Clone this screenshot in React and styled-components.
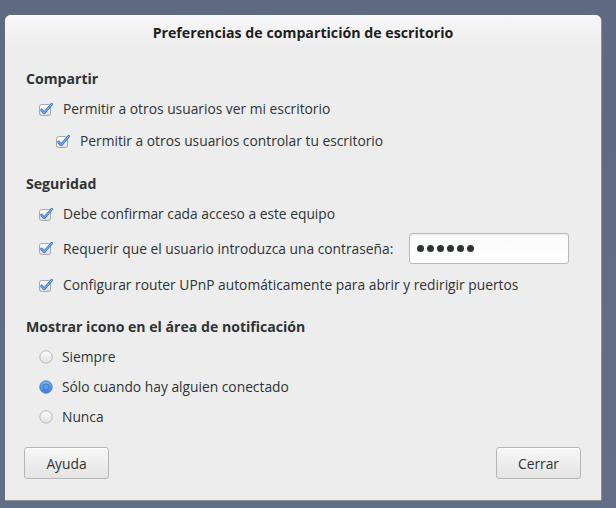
import React, { useState } from 'react';
import styled, { createGlobalStyle } from 'styled-components';

const GlobalStyle = createGlobalStyle`
  html, body {
    margin: 0;
    padding: 0;
    background: #616c82;
  }
  body {
    font-family: "Open Sans", "DejaVu Sans", sans-serif;
    color: #2e3436;
  }
`;

const Desktop = styled.div`
  width: 616px;
  height: 508px;
  padding: 15px 0 0 5px;
  box-sizing: border-box;
  background: linear-gradient(180deg, #5f6a80 0%, #646f85 100%);
`;

const Window = styled.div`
  width: 596px;
  height: 485px;
  display: flex;
  flex-direction: column;
  background: #ededed;
  border-radius: 6px 6px 0 0;
  box-shadow: 0 1px 0 #8d8f94, 1px 0 0 #8d8f94;
  overflow: hidden;
`;

const TitleBar = styled.div`
  height: 35px;
  display: flex;
  align-items: center;
  justify-content: center;
  background: linear-gradient(180deg, #f7f7f7 0%, #ededed 100%);
  font-size: 14.2px;
  font-weight: 700;
  color: #1e1e1e;
`;

const Content = styled.div`
  flex: 1;
  display: flex;
  flex-direction: column;
  padding: 20px 20px 21px 19px;
`;

const Heading = styled.div`
  height: 20px;
  line-height: 20px;
  padding-left: 2px;
  font-size: 14.1px;
  font-weight: 700;
  margin-top: ${(p) => p.$top || 0}px;
`;

const Row = styled.label`
  display: flex;
  align-items: center;
  gap: 9px;
  height: ${(p) => p.$h || 30}px;
  margin-top: ${(p) => p.$top || 0}px;
  padding-left: ${(p) => p.$indent || 15}px;
  font-size: 13.8px;
  line-height: 1;
`;

const Entry = styled.div`
  width: 160px;
  height: 31px;
  box-sizing: border-box;
  margin-left: 7px;
  padding-left: 7px;
  display: flex;
  align-items: center;
  gap: 3px;
  border: 1px solid #b9b9b9;
  border-radius: 3px;
  background: linear-gradient(180deg, #fafafa 0%, #ffffff 100%);
  box-shadow: inset 0 1px 1px rgba(0, 0, 0, 0.06);
`;

const Dot = styled.span`
  width: 7px;
  height: 7px;
  border-radius: 50%;
  background: #2e3436;
`;

const ButtonBar = styled.div`
  display: flex;
  justify-content: space-between;
  margin-top: 15px;
`;

const Button = styled.button`
  width: 85px;
  height: 32px;
  border: 1px solid #b6b6b6;
  border-radius: 3px;
  background: linear-gradient(180deg, #f7f7f7 0%, #e4e4e4 100%);
  box-shadow: inset 0 1px 0 #ffffff;
  font-family: inherit;
  font-size: 13.8px;
  color: #2e3436;
  cursor: pointer;
`;

const Check = () => (
  <svg width="15" height="15" viewBox="0 0 15 15">
    <defs>
      <linearGradient id="cbg" x1="0" y1="0" x2="0" y2="1">
        <stop offset="0" stopColor="#ffffff" />
        <stop offset="1" stopColor="#dedede" />
      </linearGradient>
    </defs>
    <rect x="0.5" y="2.5" width="11" height="11" rx="2" fill="url(#cbg)" stroke="#a9a9a9" />
    <path d="M2.5 8 L5.2 10.8 L12.8 2.2" fill="none" stroke="#3b7bd0" strokeWidth="2.6" strokeLinecap="round" strokeLinejoin="round" />
    <path d="M2.5 8 L5.2 10.8 L12.8 2.2" fill="none" stroke="#8dbcf4" strokeWidth="1" strokeLinecap="round" strokeLinejoin="round" />
  </svg>
);

const Radio = ({ on }) => (
  <svg width="14" height="14" viewBox="0 0 14 14">
    <defs>
      <linearGradient id="rbg" x1="0" y1="0" x2="0" y2="1">
        <stop offset="0" stopColor="#ffffff" />
        <stop offset="1" stopColor="#e0e0e0" />
      </linearGradient>
      <linearGradient id="rbon" x1="0" y1="0" x2="0" y2="1">
        <stop offset="0" stopColor="#7fb2f3" />
        <stop offset="1" stopColor="#3a7fdc" />
      </linearGradient>
    </defs>
    <circle cx="7" cy="7" r="6.2" fill={on ? 'url(#rbon)' : 'url(#rbg)'} stroke={on ? '#4a78b8' : '#b2b2b2'} strokeWidth="0.9" />
    {on && <circle cx="7" cy="7" r="3" fill="#5b9cf0" stroke="#2c66b8" strokeWidth="0.6" />}
  </svg>
);

const App = () => {
  const [notify, setNotify] = useState('connected');
  const options = [
    { id: 'always', label: 'Siempre' },
    { id: 'connected', label: 'Sólo cuando hay alguien conectado' },
    { id: 'never', label: 'Nunca' },
  ];

  return (
    <>
      <GlobalStyle />
      <Desktop>
        <Window>
          <TitleBar>Preferencias de compartición de escritorio</TitleBar>
          <Content>
            <Heading>Compartir</Heading>
            <Row $top={5}>
              <Check />
              Permitir a otros usuarios ver mi escritorio
            </Row>
            <Row $top={2} $indent={32}>
              <Check />
              Permitir a otros usuarios controlar tu escritorio
            </Row>

            <Heading $top={18}>Seguridad</Heading>
            <Row $top={5}>
              <Check />
              Debe confirmar cada acceso a este equipo
            </Row>
            <Row $top={4} $h={31}>
              <Check />
              Requerir que el usuario introduzca una contraseña:
              <Entry>
                {[0, 1, 2, 3, 4, 5].map((i) => (
                  <Dot key={i} />
                ))}
              </Entry>
            </Row>
            <Row $top={6}>
              <Check />
              Configurar router UPnP automáticamente para abrir y redirigir puertos
            </Row>

            <Heading $top={17}>Mostrar icono en el área de notificación</Heading>
            {options.map((o, i) => (
              <Row key={o.id} $top={i === 0 ? 5 : 0} onClick={() => setNotify(o.id)}>
                <Radio on={notify === o.id} />
                {o.label}
              </Row>
            ))}

            <ButtonBar>
              <Button>Ayuda</Button>
              <Button>Cerrar</Button>
            </ButtonBar>
          </Content>
        </Window>
      </Desktop>
    </>
  );
};

export default App;
